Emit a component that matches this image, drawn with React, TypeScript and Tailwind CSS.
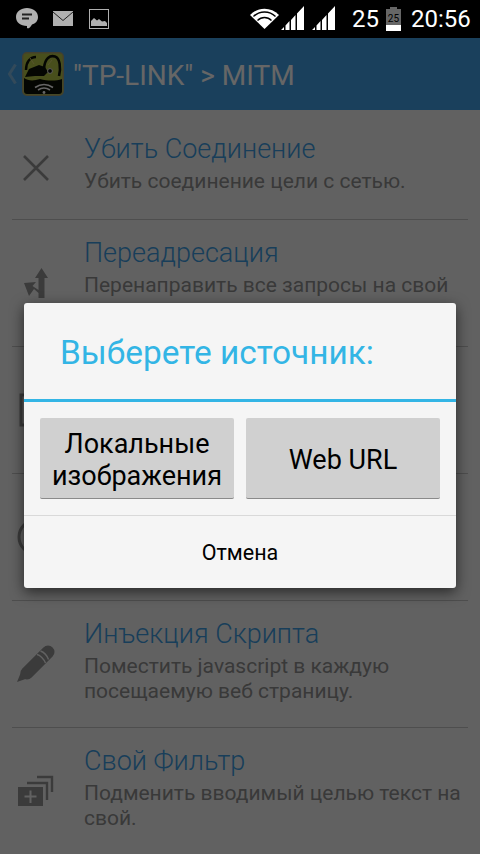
const rows = [
  { t: "Убить Соединение", d: "Убить соединение цели с сетью.", h: "h-[110px]", pt: "pt-[23px]", ip: "pt-[7px]", icon: "x" },
  { t: "Переадресация", d: "Перенаправить все запросы на свой", h: "h-[127px]", pt: "pt-[17px]", ip: "", icon: "redir" },
  { t: "", d: "", h: "h-[127px]", pt: "pt-[17px]", ip: "", icon: "img" },
  { t: "", d: "", h: "h-[127px]", pt: "pt-[17px]", ip: "", icon: "vid" },
  { t: "Инъекция Скрипта", d: "Поместить javascript в каждую посещаемую веб страницу.", h: "h-[127px]", pt: "pt-[17px]", ip: "", icon: "pen" },
  { t: "Свой Фильтр", d: "Подменить вводимый целью текст на свой.", h: "h-[127px]", pt: "pt-[17px]", ip: "", icon: "filter" },
];

function RowIcon({ k }: { k: string }) {
  const c = "#939393";
  const bg = "#f3f3f3";
  return (
    <svg width="48" height="48" viewBox="0 0 48 48" className="shrink-0">
      {k === "x" && <path d="M12 12 L36 36 M36 12 L12 36" stroke={c} strokeWidth="2.6" fill="none" />}
      {k === "redir" && (
        <path fill={c} d="M29.5 9 L36 19 H32.5 V39 H26.5 V34 L22 30 L17 37 L12 24 L24 23 L20.5 27 L26.5 31 V19 H23 Z" />
      )}
      {k === "img" && <rect x="9" y="9" width="30" height="30" stroke={c} strokeWidth="3" fill="none" />}
      {k === "vid" && <circle cx="24" cy="24" r="17" stroke={c} strokeWidth="3" fill="none" />}
      {k === "pen" && (
        <>
          <path fill={c} d="M5 42 L10.5 28.5 L19 37 Z" />
          <path d="M15 33 L36 12" stroke={c} strokeWidth="13" fill="none" strokeLinecap="round" />
          <path d="M25 14.5 C28 15 32 19 33.5 23 M28.5 11 C31.5 12 35 15.5 36.5 19.5" stroke={bg} strokeWidth="1.4" fill="none" />
        </>
      )}
      {k === "filter" && (
        <>
          <rect x="6" y="20" width="25" height="19" fill={c} />
          <path d="M18.5 23.5 V36 M12.5 29.5 H24.5" stroke={bg} strokeWidth="2" />
          <path d="M15 16 H35 V33 M25 10 H40 V25" stroke={c} strokeWidth="2.4" fill="none" />
        </>
      )}
    </svg>
  );
}

function Logo() {
  return (
    <svg width="42" height="44" viewBox="0 0 42 44" className="shrink-0">
      <rect x="0.75" y="0.75" width="40.5" height="42.5" rx="4" fill="#b4c648" stroke="#a8a070" strokeWidth="1.5" />
      <path d="M2 31 H40 V39 Q40 42 37 42 H5 Q2 42 2 39 Z" fill="#0c1006" />
      <path d="M2 31 V26 C6 29 12 29 18 27 C26 29 34 29 40 27 V31 Z" fill="#0c1006" />
      <path d="M3 25 L7 17 L17 13 L23 15 L26 20 L22 24 L13 24 Z" fill="#0c1006" />
      <path d="M4 18 C4 10 8 5 14 5" stroke="#0c1006" strokeWidth="2.4" fill="none" />
      <path d="M22 16 C23 6 28 3 33 4.5 C38 6 39 16 37 24" stroke="#0c1006" strokeWidth="2.6" fill="none" />
      <path d="M8 6 L12 12 M30 8 L26 13" stroke="#d8d070" strokeWidth="1" />
      <circle cx="28" cy="19" r="2.4" fill="#0c1006" stroke="#e8e8e8" strokeWidth="1" />
      <path d="M13 35.5 Q22 29.5 31 35.5 M16 38 Q22 34 28 38" stroke="#fff" strokeWidth="1.6" fill="none" />
      <circle cx="22" cy="40.5" r="1.4" fill="#fff" />
    </svg>
  );
}

function Signal() {
  return (
    <svg width="24" height="25" viewBox="0 0 24 25">
      <path fill="#fff" d="M0 24 L3 24 L3 21 Z M4.5 24 L8.5 24 L8.5 15 L4.5 19.5 Z M10 24 L14.5 24 L14.5 9 L10 14 Z M16 24 L23 24 L23 0 L16 7.5 Z" />
    </svg>
  );
}

export default function App() {
  return (
    <div className="relative w-[480px] h-[854px] overflow-hidden bg-[#f3f3f3] font-['Roboto',sans-serif]">
      <div className="h-[38px] bg-black flex items-center">
        <div className="flex items-center w-[240px] pl-[16px] gap-[15px]">
          <svg width="22" height="22" viewBox="0 0 22 22">
            <path fill="#b0b0b0" d="M11 0 C17 0 22 3.5 22 9 C22 13 19.5 15.5 16 16.5 C14 20 12 21 11 20 L11 18 C4.5 18 0 14.5 0 9 C0 3.5 5 0 11 0 Z" />
            <path d="M6 6.5 H16 M6 10.5 H13" stroke="#222" strokeWidth="2" />
          </svg>
          <svg width="20" height="16" viewBox="0 0 20 16">
            <path fill="#b0b0b0" d="M0 0 H20 V15 H0 Z" />
            <path d="M0 1 L10 9.5 L20 1" stroke="#222" strokeWidth="1" fill="none" />
          </svg>
          <svg width="20" height="20" viewBox="0 0 20 20" className="ml-[1px]">
            <rect x="0.5" y="0.5" width="19" height="19" stroke="#b0b0b0" fill="none" />
            <path fill="#b0b0b0" d="M2 17 V12 L5 9 L8 11.5 L10 10 L13 12.5 L16 12 L18 14 V17 Z" />
          </svg>
        </div>
        <div className="flex items-center pl-[10px]">
          <svg width="29" height="22" viewBox="0 0 29 22">
            <path fill="#fff" d="M14.5 21 L0 7 C8 -1.5 21 -1.5 29 7 Z" />
            <path d="M3.5 8.5 C9.5 2.5 19.5 2.5 25.5 8.5 M7.5 12.5 C11.5 8.5 17.5 8.5 21.5 12.5" stroke="#000" strokeWidth="1.4" fill="none" />
          </svg>
          <div className="ml-[2px] -mt-[1px]"><Signal /></div>
          <div className="ml-[7px] -mt-[1px]"><Signal /></div>
          <span className="ml-[16px] text-[24px] leading-none text-white">25</span>
          <div className="relative ml-[7px] w-[15px] h-[22px] mt-[2px] bg-[#666]">
            <div className="absolute left-[4px] w-[7px] -top-[2px] h-[2px] bg-[#666]" />
            <div className="absolute left-0 right-0 bottom-0 h-[6px] bg-white" />
            <span className="absolute left-0 right-0 top-[5px] text-center text-[10px] leading-none text-black">25</span>
          </div>
          <span className="ml-[10px] text-[24px] leading-none text-white">20:56</span>
        </div>
      </div>

      <div className="h-[72px] bg-[#41a0e6] flex items-center">
        <svg width="10" height="20" viewBox="0 0 10 20" className="ml-[7px]">
          <path d="M8.5 0.5 L2.5 10 L8.5 19.5" stroke="#7fb8e0" strokeWidth="3" fill="none" />
        </svg>
        <div className="ml-[5px]"><Logo /></div>
        <span className="ml-[9px] mt-[3px] text-[28px] leading-none text-white whitespace-nowrap">"TP-LINK" &gt; MITM</span>
      </div>

      <div className="px-[12px]">
        {rows.map((r, i) => (
          <div key={i} className={`flex border-b border-[#c4c4c4] ${r.h}`}>
            <div className={`w-[48px] flex items-center ${r.ip}`}>
              <RowIcon k={r.icon} />
            </div>
            {r.t && (
              <div className={`ml-[24px] min-w-0 ${r.pt}`}>
                <div className="text-[27px] leading-[32px] font-light text-[#3d9be0] whitespace-nowrap">{r.t}</div>
                <div className="mt-[4px] text-[21px] leading-[25px] text-[#8f8f8f]">{r.d}</div>
              </div>
            )}
          </div>
        ))}
      </div>

      <div className="absolute left-0 right-0 top-[38px] bottom-0 bg-black/60" />

      <div className="absolute left-[24px] top-[303px] w-[432px] h-[285px] bg-[#f5f5f5] rounded-[3px] shadow-[0_4px_14px_rgba(0,0,0,0.6)] flex flex-col">
        <div className="h-[96px] pl-[36px] pt-[3px] flex items-center text-[33.4px] text-[#33b5e5] leading-[40px] whitespace-nowrap">Выберете источник:</div>
        <div className="h-[3px] bg-[#33b5e5]" />
        <div className="flex gap-[12px] px-[16px] pt-[16px]">
          <div className="flex-1 h-[81px] pt-[3px] bg-[#d0d0d0] rounded-[2px] border-b border-[#8a8a8a] flex items-center justify-center text-center text-[27px] leading-[32px] text-black">
            <div>Локальные<br />изображения</div>
          </div>
          <div className="flex-1 h-[81px] pt-[3px] bg-[#d0d0d0] rounded-[2px] border-b border-[#8a8a8a] flex items-center justify-center text-[27px] leading-[32px] text-black">
            Web URL
          </div>
        </div>
        <div className="h-px bg-[#d9d9d9] mt-[16px]" />
        <div className="flex-1 pt-[2px] flex items-center justify-center text-[21.5px] leading-[28px] text-black">Отмена</div>
      </div>
    </div>
  );
}
